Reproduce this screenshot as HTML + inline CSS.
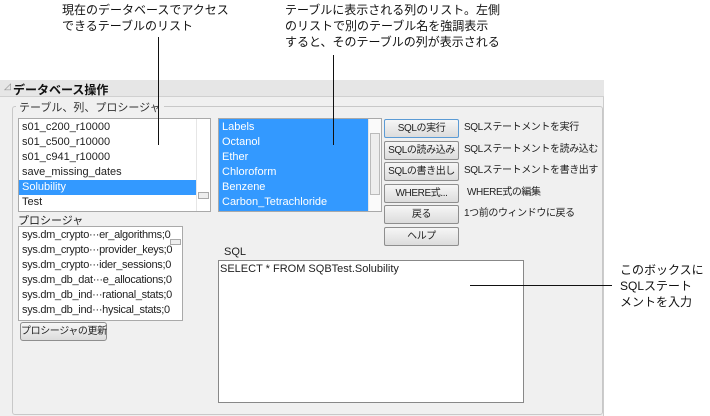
<!DOCTYPE html>
<html><head><meta charset="utf-8"><style>
*{margin:0;padding:0;box-sizing:border-box}
body{width:710px;height:416px;background:#fff;position:relative;overflow:hidden;font-family:"Liberation Sans","Noto Sans CJK JP",sans-serif;font-size:11px;color:#222}
.a{position:absolute}
.ann{font-size:12px;line-height:16px;color:#111;white-space:nowrap}
.vl{position:absolute;width:1px;background:#111}
.box{position:absolute;background:#fff;border:1px solid #a9a9a9;overflow:hidden}
.row{height:15px;line-height:15px;padding-left:3px;white-space:nowrap;font-size:11px}
.sel{background:#3399ff;color:#fff}
.btn{position:absolute;left:384px;width:75px;height:19px;border:1px solid #8e8e8e;border-radius:2px;background:linear-gradient(#f6f6f6,#dcdcdc);text-align:center;line-height:17px;font-size:10px;letter-spacing:-0.4px;white-space:nowrap}
.lbl{position:absolute;left:464px;font-size:10px;letter-spacing:-0.4px;line-height:14px;white-space:nowrap}
.sb{position:absolute;top:0;bottom:0;right:0;width:14px;background:#fff;border-left:1px solid #e6e6e6}
</style></head><body>
<div class="a ann" style="left:62px;top:2px">現在のデータベースでアクセス<br>できるテーブルのリスト</div>
<div class="a ann" style="left:285px;top:2px">テーブルに表示される列のリスト。左側<br>のリストで別のテーブル名を強調表示<br>すると、そのテーブルの列が表示される</div>

<div class="a" style="left:0;top:80px;width:604px;height:336px;background:#f0f0f0;border-right:1px solid #ccc"></div>
<div class="a" style="left:0;top:80px;width:604px;height:17px;background:#e6e6e6;border-bottom:1px solid #d0d0d0"></div>
<div class="a" style="left:4px;top:81px;font-size:9px;color:#888">◿</div>
<div class="a" style="left:13px;top:81px;font-size:12px;font-weight:bold;color:#111">データベース操作</div>
<div class="a" style="left:12px;top:106px;width:591px;height:309px;border:1px solid #c8c8c8;border-radius:3px"></div>
<div class="a" style="left:16px;top:99px;background:#f0f0f0;padding:0 3px;font-size:11px;color:#333">テーブル、列、プロシージャ</div>

<div class="vl" style="left:158px;top:37px;height:108px"></div>
<div class="vl" style="left:333px;top:55px;height:90px"></div>

<div class="box" style="left:18px;top:118px;width:193px;height:94px;padding-top:1px">
<div class="row">s01_c200_r10000</div><div class="row">s01_c500_r10000</div><div class="row">s01_c941_r10000</div><div class="row">save_missing_dates</div><div class="row sel" style="margin-right:14px">Solubility</div><div class="row">Test</div>
<div class="sb"><div class="a" style="left:1px;top:73px;width:11px;height:7px;border:1px solid #aaa;background:#eee"></div></div>
</div>
<div class="vl" style="left:158px;top:118px;height:27px"></div>

<div class="box" style="left:218px;top:118px;width:164px;height:94px;padding-top:1px;background:#3399ff">
<div class="row sel">Labels</div><div class="row sel">Octanol</div><div class="row sel">Ether</div><div class="row sel">Chloroform</div><div class="row sel">Benzene</div><div class="row sel">Carbon_Tetrachloride</div>
<div class="sb" style="width:13px;background:#fafafa"><div class="a" style="left:1px;top:14px;width:10px;height:62px;border:1px solid #bbb;background:#eee"></div></div>
</div>
<div class="vl" style="left:333px;top:118px;height:27px"></div>

<div class="btn" style="top:119px;border-color:#5b9bd5">SQLの実行</div>
<div class="btn" style="top:141px">SQLの読み込み</div>
<div class="btn" style="top:162px">SQLの書き出し</div>
<div class="btn" style="top:184px">WHERE式...</div>
<div class="btn" style="top:205px">戻る</div>
<div class="btn" style="top:227px">ヘルプ</div>
<div class="lbl" style="top:121px">SQLステートメントを実行</div>
<div class="lbl" style="top:143px">SQLステートメントを読み込む</div>
<div class="lbl" style="top:164px">SQLステートメントを書き出す</div>
<div class="lbl" style="top:186px;left:467px">WHERE式の編集</div>
<div class="lbl" style="top:207px">1つ前のウィンドウに戻る</div>

<div class="a" style="left:18px;top:212px;font-size:11px">プロシージャ</div>
<div class="box" style="left:18px;top:226px;width:165px;height:95px;padding-top:1px">
<div class="row" style="letter-spacing:-0.3px">sys.dm_crypto···er_algorithms;0</div><div class="row" style="letter-spacing:-0.3px">sys.dm_crypto···provider_keys;0</div><div class="row" style="letter-spacing:-0.3px">sys.dm_crypto···ider_sessions;0</div><div class="row" style="letter-spacing:-0.3px">sys.dm_db_dat···e_allocations;0</div><div class="row" style="letter-spacing:-0.3px">sys.dm_db_ind···rational_stats;0</div><div class="row" style="letter-spacing:-0.3px">sys.dm_db_ind···hysical_stats;0</div>
<div class="sb" style="border:none;background:transparent"><div class="a" style="left:2px;top:12px;width:11px;height:6px;border:1px solid #aaa;background:#eee"></div></div>
</div>
<div class="a" style="left:20px;top:322px;width:87px;height:19px;border:1px solid #8e8e8e;border-radius:3px;background:linear-gradient(#f6f6f6,#dcdcdc);text-align:center;line-height:17px;font-size:10px;letter-spacing:-0.4px;white-space:nowrap">プロシージャの更新</div>

<div class="a" style="left:224px;top:246px;font-size:11px">SQL</div>
<div class="box" style="left:218px;top:260px;width:306px;height:143px;border-color:#888">
<div style="padding:1px 1px;font-size:11px;line-height:14px">SELECT * FROM SQBTest.Solubility</div></div>
<div class="a" style="left:470px;top:285px;width:142px;height:1px;background:#111"></div>
<div class="a ann" style="left:620px;top:262px">このボックスに<br>SQLステート<br>メントを入力</div>
</body></html>
